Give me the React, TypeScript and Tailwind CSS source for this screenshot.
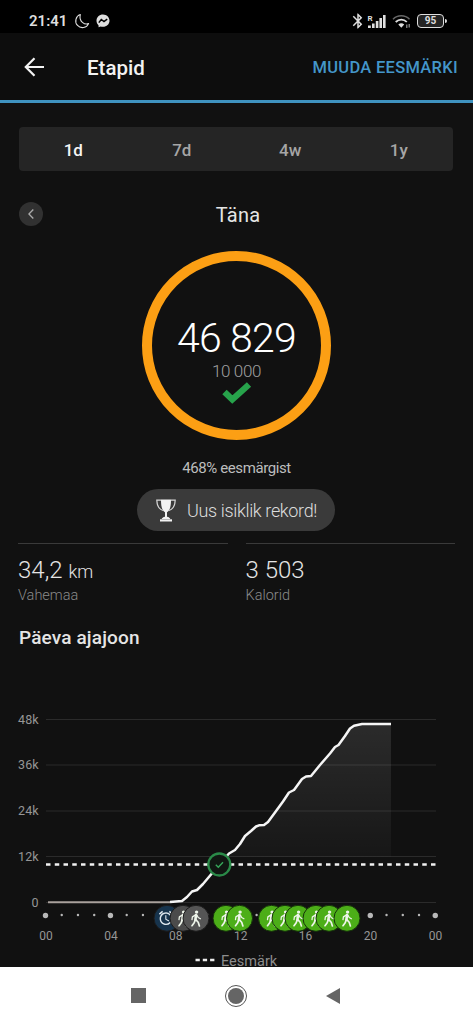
import * as React from 'react';
import { MdAlarm, MdBluetooth } from "react-icons/md";

const tabs = ["1d", "7d", "4w", "1y"];

const gridLines = [
  { y: 719.5, label: "48k" },
  { y: 765, label: "36k" },
  { y: 811, label: "24k" },
  { y: 856.5, label: "12k" },
  { y: 902.5, label: "0" },
];

const hours = ["00", "04", "08", "12", "16", "20", "00"];

const activities = [
  { x: 167, color: "#17344d", type: "alarm" },
  { x: 183, color: "#4b4b4b", type: "walk" },
  { x: 196, color: "#555555", type: "walk" },
  { x: 226, color: "#4cae18", type: "walk" },
  { x: 239.5, color: "#4cae18", type: "walk" },
  { x: 271.5, color: "#4cae18", type: "walk" },
  { x: 285, color: "#4cae18", type: "walk" },
  { x: 298, color: "#4cae18", type: "walk" },
  { x: 316, color: "#4cae18", type: "walk" },
  { x: 329, color: "#4cae18", type: "walk" },
  { x: 347, color: "#4cae18", type: "walk" },
];

const stepsLine =
  "M48 902 L170 902 L182 901 L187 897 L192 891.5 L197 890 L203 884 L219 865 L229 853.5 L235 850 L240 844 L245 836 L251 831 L256 826.5 L259 825.3 L264 825 L268 822 L279 807 L283 801.5 L289 792.5 L294 790 L302 779 L306 776.5 L311 776 L320 765 L330 753.5 L335 747 L338.5 745 L345 736 L350 728.5 L354 725.8 L362 724 L391 724";

function StatusBar() {
  return (
    <div className="flex h-[33px] items-center justify-between bg-black pt-[9px] pr-[26px] pl-[29px] text-[#dedede]">
      <div className="flex items-center">
        <span className="w-[38px] text-[15px] leading-4 font-semibold whitespace-nowrap">21:41</span>
        <svg className="ml-[7px]" width="16" height="16" viewBox="0 0 16 16" fill="none" stroke="currentColor" strokeWidth="1.1" strokeLinejoin="round">
          <path d="M6.3 1.6A6.7 6.7 0 1 0 14.6 10.6 C10.8 12.2 4.6 8.7 6.3 1.6Z" />
        </svg>
        <svg className="ml-[6px]" width="14" height="14" viewBox="0 0 14 14">
          <path d="M7 .5C3.3.5.5 3.2.5 6.8c0 1.9.8 3.4 2 4.5l.1 2 2-.8c.8.2 1.5.3 2.4.3 3.7 0 6.5-2.6 6.5-6S10.7.5 7 .5Z" fill="currentColor" />
          <path d="M2.8 8.6 5.3 5.5 8 7.6 11.2 5.2" fill="none" stroke="#000" strokeWidth="1.5" />
        </svg>
      </div>
      <div className="flex items-center">
        <MdBluetooth className="h-[18px] w-[18px]" />
        <svg width="20" height="15" viewBox="0 0 20 15">
          <text x="0.5" y="6.5" fontSize="8" fontWeight="700" fill="currentColor">R</text>
          <g fill="currentColor">
            <rect x="1" y="11.5" width="2.8" height="2.5" />
            <rect x="5" y="9.5" width="2.6" height="4.5" />
            <rect x="8.8" y="7" width="2.6" height="7" />
            <rect x="12.4" y="4" width="2.6" height="10" />
            <rect x="16" y="1" width="2.6" height="13" />
          </g>
        </svg>
        <svg className="ml-[5px]" width="20" height="15" viewBox="0 0 20 15" fill="none">
          <path d="M1 5.2C5.5 .7 13 .7 17.5 5.2" stroke="#666" strokeWidth="1.5" />
          <path d="M3.7 8C7 4.7 11.7 4.7 14.8 8" stroke="currentColor" strokeWidth="1.8" />
          <path d="M6.3 10.5Q9.3 8 12.2 10.5L9.3 13.7Z" fill="currentColor" />
          <path d="M14.8 10.5v3.5M17.2 10v3.5" stroke="#999" strokeWidth="1.2" />
        </svg>
        <div className="ml-[5px] flex h-[14px] w-[27px] items-center justify-center rounded-[4px] border-[1.5px] border-[#dedede] bg-[#242424] text-[10px] leading-none font-bold">
          95
        </div>
        <div className="ml-px h-[4px] w-[2px] rounded-r bg-[#dedede]" />
      </div>
    </div>
  );
}

function Header() {
  return (
    <header className="flex h-[70px] items-center border-b-[3px] border-[#3f93c0] bg-[#0d0d0d] pr-[15px] pl-6">
      <svg width="21" height="20" viewBox="0 0 21 20" fill="none" stroke="#f2f2f2" strokeWidth="2.2">
        <path d="M20 10H2M10.5 1.3 1.8 10l8.7 8.7" />
      </svg>
      <h1 className="ml-[42px] pt-[3px] text-[20.5px] font-medium text-[#f2f2f2]">Etapid</h1>
      <button className="ml-auto pt-[4px] text-[16.5px] font-medium tracking-[0.3px] text-[#4496c9]">MUUDA EESMÄRKI</button>
    </header>
  );
}

function Trophy() {
  return (
    <svg width="20" height="23" viewBox="0 0 20 23">
      <path d="M5 .5h10c0 6-.6 10.5-4 12.7v4.5c2 .4 3 1.2 3.3 2.3H5.7c.3-1.1 1.3-1.9 3.3-2.3v-4.5C5.6 11 5 6.5 5 .5Z" fill="#f2f2f2" />
      <path d="M4 20.3h12v2.2H4Z" fill="#f2f2f2" />
      <path d="M5 1.2H.8C1 6.3 3.2 10.3 7 11.5M15 1.2h4.2C19 6.3 16.8 10.3 13 11.5" fill="none" stroke="#d8d8d8" strokeWidth="1.2" />
    </svg>
  );
}

function Walker({ x, y }: { x: number; y: number }) {
  return (
    <g transform={`translate(${x} ${y})`} stroke="#eef5ea" fill="none" strokeLinecap="round" strokeLinejoin="round">
      <circle cx="0.6" cy="-6.2" r="1.7" fill="#eef5ea" stroke="none" />
      <path d="M0 -3.2 -0.6 1.6" strokeWidth="2.6" />
      <path d="M-0.8 -3.2 -3.6 -1.4 -4 1.3M1 -3 2.2 -0.8 4.4 0.4" strokeWidth="1.3" />
      <path d="M-0.8 1.6 -1.8 4.5 -4 7.4M0 1.6 2.2 4 3.4 7.6" strokeWidth="1.7" />
    </g>
  );
}

function Chart() {
  return (
    <svg className="block shrink-0 overflow-visible" width="473" height="307" viewBox="0 660 473 307">
      <defs>
        <linearGradient id="area" x1="0" y1="724" x2="0" y2="857" gradientUnits="userSpaceOnUse">
          <stop offset="0" stopColor="#fff" stopOpacity="0.11" />
          <stop offset="1" stopColor="#fff" stopOpacity="0.025" />
        </linearGradient>
        <clipPath id="above">
          <rect x="46" y="700" width="390" height="156.5" />
        </clipPath>
      </defs>
      {gridLines.map((line) => (
        <g key={line.label}>
          <path d={`M46 ${line.y}H436`} stroke="#2b2b2b" />
          <text x="38.5" y={line.y + 4} textAnchor="end" fontSize="12.5" fill="#969696">{line.label}</text>
        </g>
      ))}
      <path d={`${stepsLine} V902 H48Z`} fill="url(#area)" clipPath="url(#above)" />
      <path d="M46 864.5H436" stroke="#f2f2f2" strokeWidth="2.6" strokeDasharray="4.5 4.25" />
      <path d="M48 902.3H170" stroke="#a9a19c" strokeWidth="2" />
      <path d={stepsLine.replace("M48 902 L170 902", "M170 902")} fill="none" stroke="#f5f5f5" strokeWidth="2.5" strokeLinejoin="round" />
      <circle cx="219.3" cy="864.5" r="11" fill="#101712" stroke="#2a8a48" strokeWidth="2.3" />
      <path d="M215.8 864.8l2.5 2.4 4.7-4.9" fill="none" stroke="#36a85a" strokeWidth="1.4" />

      {Array.from({ length: 25 }, (_, i) => (
        <circle key={i} cx={45.5 + i * 16.24} cy={i % 4 === 0 ? 915.5 : 915} r={i % 4 === 0 ? 2.7 : 1.2} fill="#b8b8b8" />
      ))}
      {hours.map((hour, i) => (
        <text key={i} x={46 + i * 64.9} y="940" textAnchor="middle" fontSize="12" fill="#969696">{hour}</text>
      ))}
      {activities.map((item) => (
        <g key={item.x}>
          <circle cx={item.x} cy="918.3" r="13" fill={item.color} stroke={item.color === "#4cae18" ? "#15320a" : "#1b1b1b"} strokeWidth="1" />
          {item.type === "alarm" ? (
            <MdAlarm x={item.x - 9.5} y={909.5} size={17} color="#dfe8ef" />
          ) : (
            <Walker x={item.x} y={918.3} />
          )}
        </g>
      ))}
      <path d="M195.5 960H215" stroke="#eeeeee" strokeWidth="2.6" strokeDasharray="4.3 3" />
      <text x="221" y="965.5" fontSize="14.5" fill="#8d8d8d">Eesmärk</text>
    </svg>
  );
}

function App() {
  return (
    <div className="h-[1024px] w-[473px] overflow-hidden bg-[#111111] font-['Roboto',sans-serif] text-[#e5e5e5]">
      <StatusBar />
      <Header />
      <main className="flex h-[864px] flex-col">
        <div className="mr-5 ml-[19px] mt-6 grid h-11 grid-cols-4 items-center rounded-[4px] bg-[#252525] pt-[3px] text-center text-[17px] font-medium">
          {tabs.map((tab, i) => (
            <button key={tab} className={i === 0 ? "text-[#f5f5f5]" : "text-[#a6a6a6]"}>{tab}</button>
          ))}
        </div>
        <div className="mt-[31px] mb-[25px] grid h-6 grid-cols-[24px_1fr_24px] items-center px-[19px]">
          <button className="mb-[5px] flex size-6 items-center justify-center rounded-full bg-[#313131]">
            <svg width="6" height="10" viewBox="0 0 6 10" fill="none" stroke="#aaaaaa" strokeWidth="1.4">
              <path d="M5.3.5.9 5l4.4 4.5" />
            </svg>
          </button>
          <h2 className="mb-1 pl-[3px] text-center text-[20px] leading-6 tracking-[0.2px]">Täna</h2>
        </div>
        <div className="flex size-[189px] shrink-0 flex-col items-center self-center rounded-full border-[10px] border-[#fc9f14] pt-[54px]">
          <div className="text-[41px] leading-[46px] font-light tracking-[-0.8px] whitespace-nowrap text-white">46 829</div>
          <div className="text-[17px] leading-[20px] font-light tracking-[-0.4px] text-[#a0a0a0]">10 000</div>
          <svg className="mt-[1px]" width="30" height="22" viewBox="0 0 30 22" fill="none">
            <path d="M2.5 10 10.3 17.5 27 2.5" stroke="#27a34b" strokeWidth="6.3" />
          </svg>
        </div>
        <p className="mt-[18px] text-center text-[15px] leading-5 tracking-[-0.4px] text-[#bdbdbd]">468% eesmärgist</p>
        <div className="mt-[11px] mr-px flex h-[42px] w-[198px] items-center self-center rounded-full bg-[#3a3a3a] pl-[19px]">
          <Trophy />
          <span className="ml-[11px] text-[18px] font-light tracking-[-0.35px] whitespace-nowrap text-[#dddddd]">Uus isiklik rekord!</span>
        </div>
        <div className="mt-3 grid h-[76px] grid-cols-2 gap-[18px] px-[18px]">
          <div className="border-t border-[#3a3a3a] pt-[12px]">
            <div className="h-[29px] text-[24px] leading-7 font-light">34,2 <span className="text-[18px] leading-none">km</span></div>
            <div className="text-[14.5px] leading-[22px] font-light text-[#8a8a8a]">Vahemaa</div>
          </div>
          <div className="border-t border-[#3a3a3a] pt-[12px]">
            <div className="h-[29px] text-[24px] leading-7 font-light">3 503</div>
            <div className="text-[14.5px] leading-[22px] font-light text-[#8a8a8a]">Kalorid</div>
          </div>
        </div>
        <h3 className="mt-[6px] ml-[19px] h-[35px] shrink-0 text-[19px] leading-[26px] font-medium tracking-[0.15px]">Päeva ajajoon</h3>
        <Chart />
      </main>
      <nav className="grid h-[57px] grid-cols-[198px_77px_198px] items-center bg-white">
        <div className="ml-[131px] size-[15px] bg-[#656565]" />
        <div className="ml-[27px] flex size-[22px] items-center justify-center rounded-full border-[1.5px] border-[#555]">
          <div className="size-[16px] rounded-full bg-[#656565]" />
        </div>
        <svg className="ml-[51px]" width="14" height="16" viewBox="0 0 14 16">
          <path d="M14 0v16L0 8Z" fill="#656565" />
        </svg>
      </nav>
    </div>
  );
}

export default App;
